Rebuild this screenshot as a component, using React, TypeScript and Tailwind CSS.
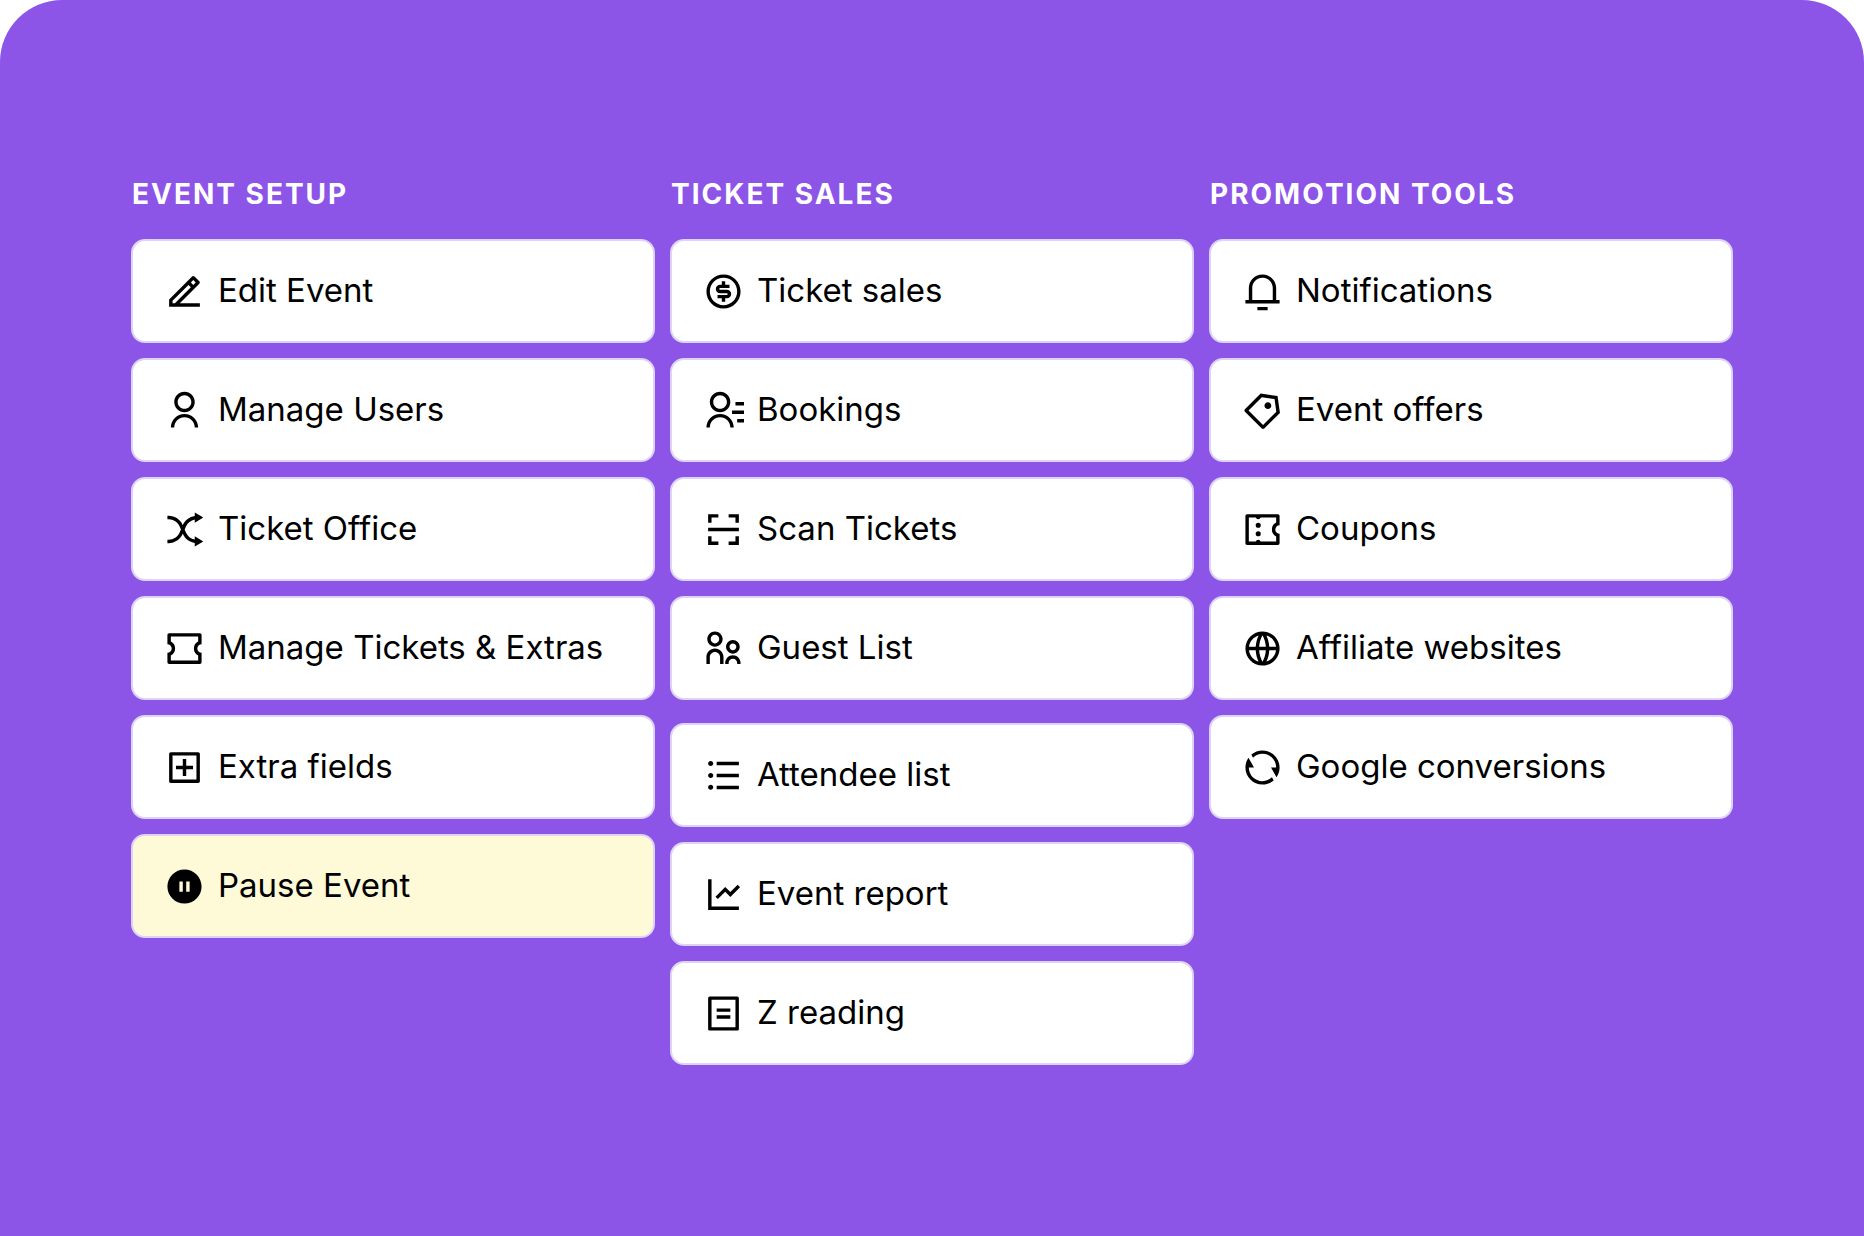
import type { ComponentType, SVGProps } from "react";
import {
  RiAddBoxLine,
  RiBillLine,
  RiContactsLine,
  RiEdit2Line,
  RiGlobalLine,
  RiLineChartLine,
  RiListUnordered,
  RiMoneyDollarCircleLine,
  RiNotification3Line,
  RiParentLine,
  RiPauseCircleFill,
  RiPriceTag3Line,
  RiQrScan2Line,
  RiRefreshLine,
  RiShuffleLine,
  RiUserLine,
} from "react-icons/ri";

interface MenuItem {
  label: string;
  icon: ComponentType<{ className?: string }>;
  highlighted?: boolean;
}

interface MenuColumnProps {
  title: string;
  groups: MenuItem[][];
}

function TicketIcon(props: SVGProps<SVGSVGElement>) {
  return (
    <svg viewBox="0 0 24 24" fill="currentColor" {...props}>
      <path d="M2 9.5V4a1 1 0 0 1 1-1h18a1 1 0 0 1 1 1v5.5a2.5 2.5 0 1 0 0 5V20a1 1 0 0 1-1 1H3a1 1 0 0 1-1-1v-5.5a2.5 2.5 0 1 0 0-5zm2-1.532a4.5 4.5 0 0 1 0 8.064V19h16v-2.968a4.5 4.5 0 0 1 0-8.064V5H4v2.968z" />
    </svg>
  );
}

function CouponIcon(props: SVGProps<SVGSVGElement>) {
  return (
    <svg viewBox="0 0 24 24" fill="currentColor" {...props}>
      <path d="M2 4a1 1 0 0 1 1-1h18a1 1 0 0 1 1 1v5.5a2.5 2.5 0 1 0 0 5V20a1 1 0 0 1-1 1H3a1 1 0 0 1-1-1V4zm6.085 15a1.5 1.5 0 0 1 2.83 0H20v-2.968a4.5 4.5 0 0 1 0-8.064V5h-9.085a1.5 1.5 0 0 1-2.83 0H4v14h4.085zM9.5 11a1.5 1.5 0 1 1 0-3 1.5 1.5 0 0 1 0 3zm0 5a1.5 1.5 0 1 1 0-3 1.5 1.5 0 0 1 0 3z" />
    </svg>
  );
}

const columns: MenuColumnProps[] = [
  {
    title: "EVENT SETUP",
    groups: [
      [
        { label: "Edit Event", icon: RiEdit2Line },
        { label: "Manage Users", icon: RiUserLine },
        { label: "Ticket Office", icon: RiShuffleLine },
        { label: "Manage Tickets & Extras", icon: TicketIcon },
        { label: "Extra fields", icon: RiAddBoxLine },
        { label: "Pause Event", icon: RiPauseCircleFill, highlighted: true },
      ],
    ],
  },
  {
    title: "TICKET SALES",
    groups: [
      [
        { label: "Ticket sales", icon: RiMoneyDollarCircleLine },
        { label: "Bookings", icon: RiContactsLine },
        { label: "Scan Tickets", icon: RiQrScan2Line },
        { label: "Guest List", icon: RiParentLine },
      ],
      [
        { label: "Attendee list", icon: RiListUnordered },
        { label: "Event report", icon: RiLineChartLine },
        { label: "Z reading", icon: RiBillLine },
      ],
    ],
  },
  {
    title: "PROMOTION TOOLS",
    groups: [
      [
        { label: "Notifications", icon: RiNotification3Line },
        { label: "Event offers", icon: RiPriceTag3Line },
        { label: "Coupons", icon: CouponIcon },
        { label: "Affiliate websites", icon: RiGlobalLine },
        { label: "Google conversions", icon: RiRefreshLine },
      ],
    ],
  },
];

function MenuLink({ label, icon: Icon, highlighted }: MenuItem) {
  return (
    <a
      href="#"
      className={`flex h-[104px] items-center gap-[13px] rounded-[14px] border-2 border-[#ddd3f6] pl-[31px] pr-4 text-black ${
        highlighted ? "bg-[#fefad8]" : "bg-white"
      }`}
    >
      <Icon className="size-[41px] shrink-0" />
      <span className="pb-[2px] text-[33px] leading-10 whitespace-nowrap">{label}</span>
    </a>
  );
}

function MenuColumn({ title, groups }: MenuColumnProps) {
  return (
    <section>
      <h2 className="mb-[25px] pl-px text-[28px] leading-10 font-bold tracking-[2px] whitespace-nowrap text-white">
        {title}
      </h2>
      <div className="flex flex-col gap-[23px]">
        {groups.map((items, index) => (
          <ul key={index} className="flex flex-col gap-[15px]">
            {items.map((item) => (
              <li key={item.label}>
                <MenuLink {...item} />
              </li>
            ))}
          </ul>
        ))}
      </div>
    </section>
  );
}

export default function App() {
  return (
    <div className="bg-white font-['Inter',sans-serif]">
      <main className="min-h-screen rounded-t-[62px] bg-[#8d54e8] px-[131px] pt-[174px] pb-16">
        <nav className="grid grid-cols-3 gap-[15px]">
          {columns.map((column) => (
            <MenuColumn key={column.title} {...column} />
          ))}
        </nav>
      </main>
    </div>
  );
}
